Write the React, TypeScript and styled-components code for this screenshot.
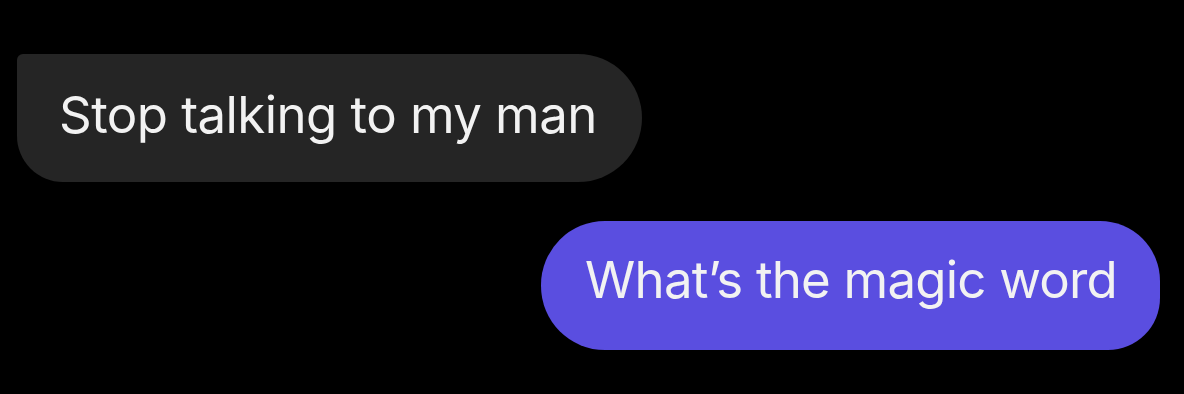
import React from "react";
import styled, { createGlobalStyle } from "styled-components";

const Global = createGlobalStyle`
  html, body {
    margin: 0;
    padding: 0;
    background: #000;
  }
  body {
    width: 1184px;
    height: 394px;
    overflow: hidden;
    font-family: Inter, "Noto Sans", "Liberation Sans", sans-serif;
  }
`;

const Thread = styled.div`
  display: flex;
  flex-direction: column;
  width: 1184px;
  height: 394px;
  box-sizing: border-box;
  padding: 54px 24px 0 17px;
  gap: 39px;
  background: #000;
`;

const Bubble = styled.div<{ $mine?: boolean }>`
  align-self: ${(p) => (p.$mine ? "flex-end" : "flex-start")};
  display: flex;
  align-items: center;
  box-sizing: border-box;
  height: ${(p) => (p.$mine ? 129 : 128)}px;
  padding: ${(p) => (p.$mine ? "0 43px 0 44px" : "0 45px 0 42px")};
  background: ${(p) => (p.$mine ? "#5a4ee0" : "#252525")};
  border-radius: ${(p) => (p.$mine ? "64px 60px 52px 64px" : "6px 64px 64px 46px")};
  color: #f2f2f2;
  font-size: 51px;
  font-weight: 400;
  letter-spacing: ${(p) => (p.$mine ? "-0.8px" : "-0.58px")};
  white-space: nowrap;
  line-height: 1;
`;

const Text = styled.span<{ $dy?: number }>`
  display: block;
  transform: translateY(${(p) => p.$dy ?? 0}px);
`;

export default function App() {
  return (
    <>
      <Global />
      <Thread>
        <Bubble>
          <Text $dy={-4}>Stop talking to my man</Text>
        </Bubble>
        <Bubble $mine>
          <Text $dy={-6}>What’s the magic word</Text>
        </Bubble>
      </Thread>
    </>
  );
}
